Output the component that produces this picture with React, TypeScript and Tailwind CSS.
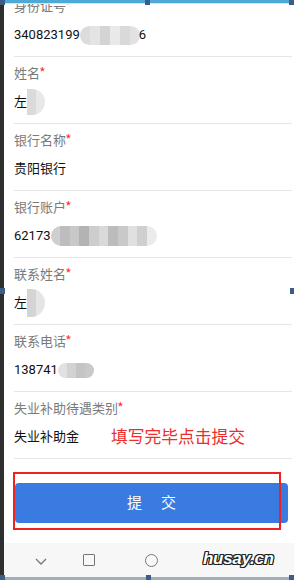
import React from "react"

type Field = {
  label: string
  value: React.ReactNode
}

function Blur({ shades, w, h, round = "rounded-full" }: { shades: string[]; w: string; h: string; round?: string }) {
  return (
    <span className={`inline-flex overflow-hidden align-middle ${w} ${h} ${round}`}>
      {shades.map((c, i) => (
        <span key={i} className="flex-1 h-full" style={{ backgroundColor: c }} />
      ))}
    </span>
  )
}

export default function App() {
  const fields: Field[] = [
    {
      label: "身份证号",
      value: (
        <>
          340823199
          <Blur w="w-[60px]" h="h-[19px]" shades={["#dcdcdc", "#e4e4e4", "#d4d4d4", "#e9e9e9", "#d9d9d9", "#e2e2e2"]} />
          <span className="-ml-[1px]">6</span>
        </>
      ),
    },
    {
      label: "姓名",
      value: (
        <>
          左
          <Blur w="w-[18px]" h="h-[26px]" round="rounded-r-full" shades={["#dadada", "#e8e8e8"]} />
        </>
      ),
    },
    { label: "银行名称", value: "贵阳银行" },
    {
      label: "银行账户",
      value: (
        <>
          62173
          <Blur
            w="w-[106px]"
            h="h-[20px]"
            shades={["#cfcfcf", "#bdbdbd", "#c8c8c8", "#b3b3b3", "#cdcdcd", "#d9d9d9", "#bcbcbc", "#c9c9c9", "#e0e0e0", "#cfcfcf", "#ebebeb"]}
          />
        </>
      ),
    },
    {
      label: "联系姓名",
      value: (
        <>
          左
          <Blur w="w-[18px]" h="h-[28px]" round="rounded-r-full" shades={["#d4d4d4", "#e5e5e5"]} />
        </>
      ),
    },
    {
      label: "联系电话",
      value: (
        <>
          138741
          <Blur w="w-[36px]" h="h-[15px]" shades={["#e1e1e1", "#d2d2d2", "#c4c4c4", "#c9c9c9"]} />
        </>
      ),
    },
    {
      label: "失业补助待遇类别",
      value: (
        <>
          失业补助金
          <span className="ml-[32px] text-[16.75px] text-[#ef2b2b]">填写完毕点击提交</span>
        </>
      ),
    },
  ]

  return (
    <div className="relative w-[294px] h-[580px] overflow-hidden bg-white font-['Roboto','Noto_Sans_CJK_SC',sans-serif]">
      <div className="flex h-full">
        {/* left frame edge */}
        <div className="w-[4px] shrink-0 bg-[#2e2e2e]" />

        <div className="flex-1 flex flex-col">
          <div className="flex-1 overflow-hidden">
            <div className="-mt-[10px] pl-[10px] pr-[2px]">
              {fields.map((f) => (
                <div key={f.label} className="pt-[7px] pb-[11px] border-b border-[#e6e6e6]">
                  <div className="h-[20px] leading-[20px] text-[13px] text-[#7a7a7a]">
                    {f.label}
                    <span className="relative -top-[3px] text-[11px] text-[#ff1a1a]">*</span>
                  </div>
                  <div className="mt-[8px] h-[20px] leading-[20px] text-[13px] text-[#111] whitespace-nowrap flex items-center">
                    {f.value}
                  </div>
                </div>
              ))}

              <div className="mt-[24px] pl-[1px]">
                <button className="w-[273px] h-[40px] rounded-[4px] bg-[#3a7be2] text-white text-[15px] flex items-center justify-center gap-[19px]">
                  <span>提</span>
                  <span>交</span>
                </button>
              </div>
            </div>
          </div>

          {/* android nav bar */}
          <div className="h-[34px] bg-[#f7f7f7] flex items-center pl-[31px]">
            <svg width="12" height="7" viewBox="0 0 12 7" fill="none" className="mt-[3px]">
              <path d="M1 1l5 5 5-5" stroke="#777" strokeWidth="1.3" />
            </svg>
            <div className="ml-[36px] w-[12px] h-[12px] border-[1.5px] border-[#777] rounded-[1px]" />
            <div className="ml-[50px] w-[13px] h-[13px] border-[1.5px] border-[#777] rounded-full" />
            <span className="ml-[45px] -mt-[2px] text-[17px] leading-[20px] font-bold italic tracking-[-0.3px] font-['Liberation_Sans',sans-serif] text-white [text-shadow:1px_0_0_#222,-1px_0_0_#222,0_1px_0_#222,0_-1px_0_#222,1px_1px_0_#222,-1px_-1px_0_#222,1px_-1px_0_#222,-1px_1px_0_#222]">
              husay.cn
            </span>
          </div>
          <div className="h-[3px] bg-[#a3adb6]" />
        </div>
      </div>

      {/* top strip */}
      <div className="absolute left-0 top-0 w-full h-[4px] bg-[#4fa9d6] border-b border-[#cfe6f2]" />

      {/* annotation box */}
      <div className="absolute left-[13px] top-[472px] w-[268px] h-[58px] border-2 border-[#ee2222]" />

      {/* selection handles */}
      <div className="absolute left-0 top-0 w-[5px] h-[5px] bg-[#3e5d86]" />
      <div className="absolute left-[145px] top-0 w-[5px] h-[5px] bg-[#3e5d86]" />
      <div className="absolute left-[289px] top-0 w-[5px] h-[5px] bg-[#3e5d86]" />
      <div className="absolute left-0 top-[288px] w-[5px] h-[6px] bg-[#3e5d86]" />
      <div className="absolute left-[290px] top-[288px] w-[4px] h-[6px] bg-[#3e5d86]" />
      <div className="absolute left-0 top-[575px] w-[5px] h-[5px] bg-[#3e5d86]" />
      <div className="absolute left-[146px] top-[575px] w-[5px] h-[5px] bg-[#3e5d86]" />
      <div className="absolute left-[289px] top-[575px] w-[5px] h-[5px] bg-[#3e5d86]" />
    </div>
  )
}
